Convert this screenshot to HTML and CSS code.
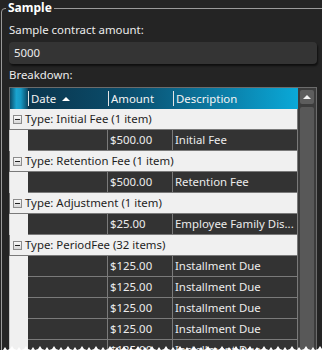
FILE: index.html
```html
<!DOCTYPE html>
<html lang="en">
<head>
  <meta charset="UTF-8">
  <meta name="viewport" content="width=device-width, initial-scale=1.0">
  <title>Sample</title>
  <link rel="stylesheet" href="styles.css">
</head>
<body>
  <fieldset class="sample">
    <legend>Sample</legend>
    <div class="field-label">Sample contract amount:</div>
    <div class="textbox">5000</div>
    <div class="field-label">Breakdown:</div>
    <div class="grid">
      <div class="grid-body">
        <div class="head">
          <div class="row-head"></div>
          <div class="col-head date"><span class="sep"></span>Date <span class="sort"></span></div>
          <div class="col-head amount"><span class="sep"></span>Amount</div>
          <div class="col-head desc"><span class="sep"></span>Description</div>
        </div>

        <div class="group"><span class="expander"></span>Type: Initial Fee (1 item)</div>
        <div class="item"><span class="indent"></span><span class="cell"></span><span class="cell">$500.00</span><span class="cell desc">Initial Fee</span></div>

        <div class="group"><span class="expander"></span>Type: Retention Fee (1 item)</div>
        <div class="item"><span class="indent"></span><span class="cell"></span><span class="cell">$500.00</span><span class="cell desc">Retention Fee</span></div>

        <div class="group"><span class="expander"></span>Type: Adjustment (1 item)</div>
        <div class="item"><span class="indent"></span><span class="cell"></span><span class="cell">$25.00</span><span class="cell desc">Employee Family Dis...</span></div>

        <div class="group"><span class="expander"></span>Type: PeriodFee (32 items)</div>
        <div class="item"><span class="indent"></span><span class="cell"></span><span class="cell">$125.00</span><span class="cell desc">Installment Due</span></div>
        <div class="item"><span class="indent"></span><span class="cell"></span><span class="cell">$125.00</span><span class="cell desc">Installment Due</span></div>
        <div class="item"><span class="indent"></span><span class="cell"></span><span class="cell">$125.00</span><span class="cell desc">Installment Due</span></div>
        <div class="item"><span class="indent"></span><span class="cell"></span><span class="cell">$125.00</span><span class="cell desc">Installment Due</span></div>
        <div class="item"><span class="indent"></span><span class="cell"></span><span class="cell">$125.00</span><span class="cell desc">Installment Due</span></div>
      </div>
      <div class="scrollbar">
        <div class="scroll-up"></div>
        <div class="thumb"></div>
      </div>
    </div>
  </fieldset>

  <svg class="torn" width="322" height="7" viewBox="0 0 322 7">
    <path fill="#fff" d="M0 7 L0 5 L3 5 L5 2 L7 5 L10 4 L12 1 L14 4 L17 5 L19 2 L21 5 L24 4 L26 1 L28 4 L31 5 L33 2 L35 5 L38 4 L40 1 L42 4 L45 5 L47 2 L49 5 L52 4 L54 1 L56 4 L59 5 L61 2 L63 5 L66 4 L68 1 L70 4 L73 5 L75 2 L77 5 L80 4 L82 1 L84 4 L87 5 L89 2 L91 5 L94 4 L96 1 L98 4 L101 5 L103 2 L105 5 L108 4 L110 1 L112 4 L115 5 L117 2 L119 5 L122 4 L124 1 L126 4 L129 5 L131 2 L133 5 L136 4 L138 1 L140 4 L143 5 L145 2 L147 5 L150 4 L152 1 L154 4 L157 5 L159 2 L161 5 L164 4 L166 1 L168 4 L171 5 L173 2 L175 5 L178 4 L180 1 L182 4 L185 5 L187 2 L189 5 L192 4 L194 1 L196 4 L199 5 L201 2 L203 5 L206 4 L208 1 L210 4 L213 5 L215 2 L217 5 L220 4 L222 1 L224 4 L227 5 L229 2 L231 5 L234 4 L236 1 L238 4 L241 5 L243 2 L245 5 L248 4 L250 1 L252 4 L255 5 L257 2 L259 5 L262 4 L264 1 L266 4 L269 5 L271 2 L273 5 L276 4 L278 1 L280 4 L283 5 L285 2 L287 5 L290 4 L292 1 L294 4 L297 5 L299 2 L301 5 L304 4 L306 1 L308 4 L311 5 L313 2 L315 5 L318 4 L320 1 L322 4 L322 7 Z"/>
  </svg>
</body>
</html>
```

FILE: styles.css
```css
html, body { margin: 0; height: 352px; overflow: hidden; }
body {
  background: #242424;
  color: #ececec;
  font-family: "Noto Sans", "Open Sans", sans-serif;
  font-size: 11.4px;
  position: relative;
}

.sample {
  margin: 0 0 0 1px;
  padding: 6px 0 0 7px;
  width: 318px;
  border: 1px solid #9a9a9a;
  border-radius: 4px;
}
.sample legend {
  font-weight: bold;
  font-size: 12px;
  color: #fff;
  padding: 0 2px;
  margin-left: -3px;
  line-height: 16px;
}

.field-label { width: 308px; line-height: 16px; margin-bottom: 4px; }

.textbox {
  width: 308px;
  box-sizing: border-box;
  height: 22px;
  line-height: 21px;
  padding-left: 5px;
  background: #343434;
  border-radius: 4px;
  box-shadow: 1px 2px 2px rgba(0, 0, 0, 0.6);
  margin-bottom: 3px;
}

.grid {
  width: 308px;
  box-sizing: border-box;
  border: 1px solid #6c6c6c;
  display: flex;
  height: 300px;
}
.grid-body { width: 288px; }

.head {
  display: grid;
  grid-template-columns: 18px 80px 65px 125px;
  height: 21px;
  background: linear-gradient(to right, #0b3147 0%, #0a4d6c 40%, #0b7fa9 75%, #0aa9d8 100%);
  color: #f4f4f4;
}
.row-head { background: linear-gradient(to right, #0b4a66 0%, #1aa4cf 35%, #1799c4 60%, #0b4661 100%); }
.col-head { display: flex; align-items: center; line-height: 20px; }
.sep { width: 1px; height: 15px; background: #e4e4e4; margin-right: 2px; }
.sort {
  width: 0; height: 0;
  margin-left: 6px;
  border-left: 4px solid transparent;
  border-right: 4px solid transparent;
  border-bottom: 4px solid #fff;
}

.group {
  display: flex;
  align-items: center;
  height: 20px;
  line-height: 20px;
  background: #f0f0f0;
  color: #1e1e1e;
  border-bottom: 1px solid #7a7a7a;
  border-right: 1px solid #7a7a7a;
  padding-left: 3px;
}
.expander {
  width: 7px; height: 7px;
  border: 1px solid #8c8c8c;
  background: linear-gradient(#fafafa, #d6d6d6);
  margin-right: 3px;
  display: flex;
  align-items: center;
  justify-content: center;
}
.expander::after { content: ""; width: 5px; height: 1px; background: #222; }

.item {
  display: grid;
  grid-template-columns: 18px 80px 65px 125px;
  height: 21px;
}
.indent { background: #f0f0f0; border-left: 1px solid #c8c8c8; margin-left: -1px; }
.cell {
  background: #333;
  border-right: 1px solid #7a7a7a;
  border-bottom: 1px solid #7a7a7a;
  line-height: 20px;
  padding-left: 2px;
  white-space: nowrap;
  overflow: hidden;
}

.scrollbar {
  flex: 1;
  background: #3c3c3c;
  padding: 2px 2px 0 2px;
  display: flex;
  flex-direction: column;
  gap: 3px;
}
.scroll-up {
  height: 14px;
  background: #5d5d5d;
  border-radius: 2px;
  display: flex;
  align-items: center;
  justify-content: center;
}
.scroll-up::after {
  content: "";
  border-left: 4px solid transparent;
  border-right: 4px solid transparent;
  border-bottom: 4px solid #f2f2f2;
}
.thumb { flex: 1; background: #585858; border-radius: 2px 2px 0 0; }

.torn { position: absolute; left: 0; bottom: 0; display: block; }
```
